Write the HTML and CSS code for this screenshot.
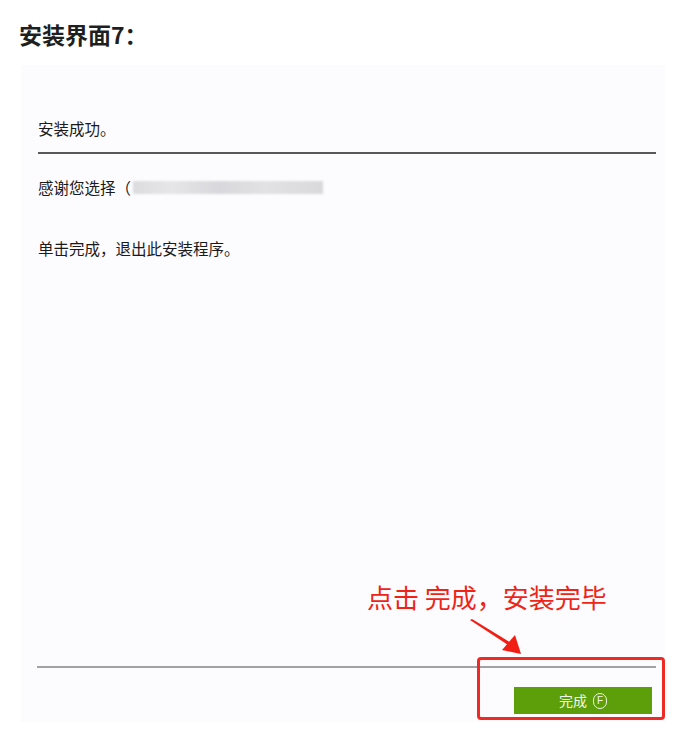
FILE: index.html
```html
<!DOCTYPE html>
<html>
<head>
<meta charset="utf-8">
<link rel="stylesheet" href="styles.css">
</head>
<body>
<h1 class="title">安装界面7：</h1>
<div class="panel">
  <p class="row first">安装成功。</p>
  <div class="rule dark"></div>
  <p class="row thanks">感谢您选择（<span class="blur"></span></p>
  <p class="row exit">单击完成，退出此安装程序。</p>
  <div class="spacer"></div>
  <div class="footer">
    <div class="rule light"></div>
    <div class="btn-row">
      <button class="finish">完成 <span class="key">F</span></button>
    </div>
  </div>
  <div class="note">点击 完成，安装完毕</div>
  <svg class="arrow" width="60" height="40" viewBox="0 0 60 40">
    <polygon points="1,2 3,1 44,26 42,29" fill="#f01e14"/>
    <polygon points="52,36 33,32 46,17" fill="#f01e14"/>
  </svg>
  <div class="highlight"></div>
</div>
</body>
</html>
```
FILE: styles.css
```css
html, body {
  margin: 0;
  padding: 0;
  background: #ffffff;
}
body {
  width: 675px;
  height: 737px;
  position: relative;
  font-family: "Noto Sans CJK SC", "Noto Sans", sans-serif;
  overflow: hidden;
}
.title {
  margin: 0;
  padding: 19px 0 0 19px;
  height: 65px;
  box-sizing: border-box;
  font-size: 23px;
  line-height: 30px;
  font-weight: 700;
  color: #1f1f1f;
}
.panel {
  position: relative;
  margin: 0 10px 0 21px;
  height: 657px;
  background: #fcfbfe;
  display: flex;
  flex-direction: column;
  padding: 0 9px 0 17px;
}
.row {
  margin: 0;
  font-size: 15.5px;
  line-height: 20px;
  color: #1a1a1a;
}
.row.first {
  margin-top: 53px;
}
.rule.dark {
  height: 2px;
  background: #58585a;
  margin-top: 14px;
}
.row.thanks {
  margin-top: 23px;
  display: flex;
  align-items: center;
}
.blur {
  display: inline-block;
  width: 190px;
  height: 13px;
  margin-left: 2px;
  background: linear-gradient(90deg, #dcdcdf 0%, #e6e6e8 20%, #d8d8dc 45%, #e2e2e4 70%, #d9d9dc 100%);
  filter: blur(1px);
}
.row.exit {
  margin-top: 41px;
}
.spacer {
  flex: 1;
}
.footer {
  padding-bottom: 8px;
}
.rule.light {
  height: 2px;
  background: #a2a2a6;
  margin-left: -1px;
  margin-right: 0;
}
.btn-row {
  display: flex;
  justify-content: flex-end;
  margin-top: 19px;
  padding-right: 4px;
}
.finish {
  width: 138px;
  height: 27px;
  border: none;
  background: #5d9f0b;
  color: #f2f8e8;
  font-family: "Noto Sans CJK SC", sans-serif;
  font-size: 14px;
  line-height: 27px;
  padding: 0;
  display: flex;
  align-items: center;
  justify-content: center;
  gap: 6px;
}
.key {
  display: inline-flex;
  width: 12px;
  height: 14px;
  border: 1px solid #eef6e0;
  border-radius: 7px;
  font-size: 10px;
  line-height: 14px;
  align-items: center;
  justify-content: center;
  font-family: "Liberation Sans", sans-serif;
}
.note {
  position: absolute;
  left: 346px;
  top: 515px;
  font-size: 26px;
  line-height: 34px;
  color: #ee2418;
}
.arrow {
  position: absolute;
  left: 448px;
  top: 553px;
}
.highlight {
  position: absolute;
  left: 456px;
  top: 592px;
  width: 182px;
  height: 57px;
  border: 3px solid #ee2a24;
  border-radius: 4px;
}
```
